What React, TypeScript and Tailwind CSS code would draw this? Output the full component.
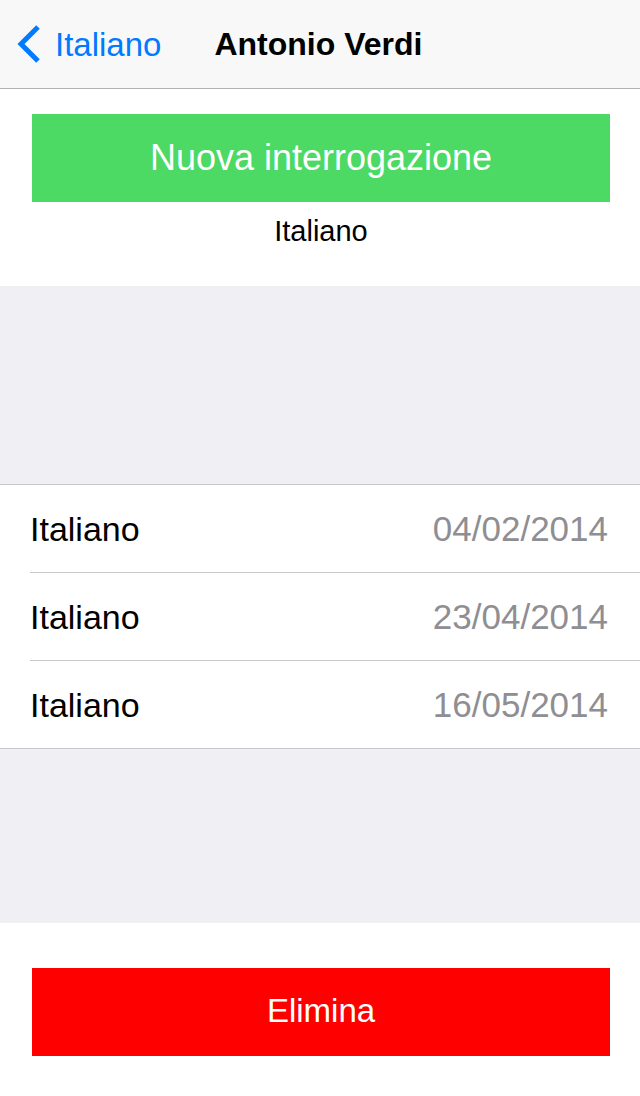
const rows = [
  { subject: 'Italiano', date: '04/02/2014' },
  { subject: 'Italiano', date: '23/04/2014' },
  { subject: 'Italiano', date: '16/05/2014' },
]

export default function App() {
  return (
    <div className="w-[640px] h-[1096px] bg-[#efeff4] flex flex-col overflow-hidden" style={{ fontFamily: '"Liberation Sans", Arial, sans-serif' }}>
      {/* nav bar */}
      <div className="h-[89px] shrink-0 bg-[#f8f8f8] border-b border-[#b2b2b2] flex items-center">
        <div className="flex items-center pl-[16px] text-[#007aff]">
          <svg width="26" height="40" viewBox="0 0 26 40" fill="none">
            <path d="M22 3 L5 20 L22 37" stroke="#007aff" strokeWidth="5" strokeLinecap="butt" strokeLinejoin="miter" />
          </svg>
          <span className="ml-[13px] text-[33px] leading-none">Italiano</span>
        </div>
        <span className="ml-[53px] text-[32px] font-bold leading-none text-black">Antonio Verdi</span>
      </div>

      {/* new test */}
      <div className="h-[197px] shrink-0 bg-white pl-[32px] pr-[30px] pt-[25px] flex flex-col">
        <button className="h-[88px] w-full bg-[#4cd964] text-white text-[36px] leading-none">Nuova interrogazione</button>
        <div className="mt-[15px] text-center text-[29px] leading-none text-black">Italiano</div>
      </div>

      <div className="h-[198px] shrink-0" />

      {/* list */}
      <div className="bg-white border-t border-b border-[#c8c7cc] shrink-0">
        {rows.map((r, i) => (
          <div key={i} className={`ml-[30px] pr-[32px] flex items-center justify-between ${i < rows.length - 1 ? 'border-b border-[#c8c7cc] h-[88px]' : 'h-[87px]'}`}>
            <span className="text-[34px] text-black leading-none">{r.subject}</span>
            <span className="text-[35px] text-[#8e8e93] leading-none">{r.date}</span>
          </div>
        ))}
      </div>

      <div className="h-[174px] shrink-0" />

      {/* delete */}
      <div className="flex-1 bg-white pl-[32px] pr-[30px] pt-[45px]">
        <button className="h-[88px] w-full bg-[#ff0000] text-white text-[33px] leading-none pb-[4px]">Elimina</button>
      </div>
    </div>
  )
}
